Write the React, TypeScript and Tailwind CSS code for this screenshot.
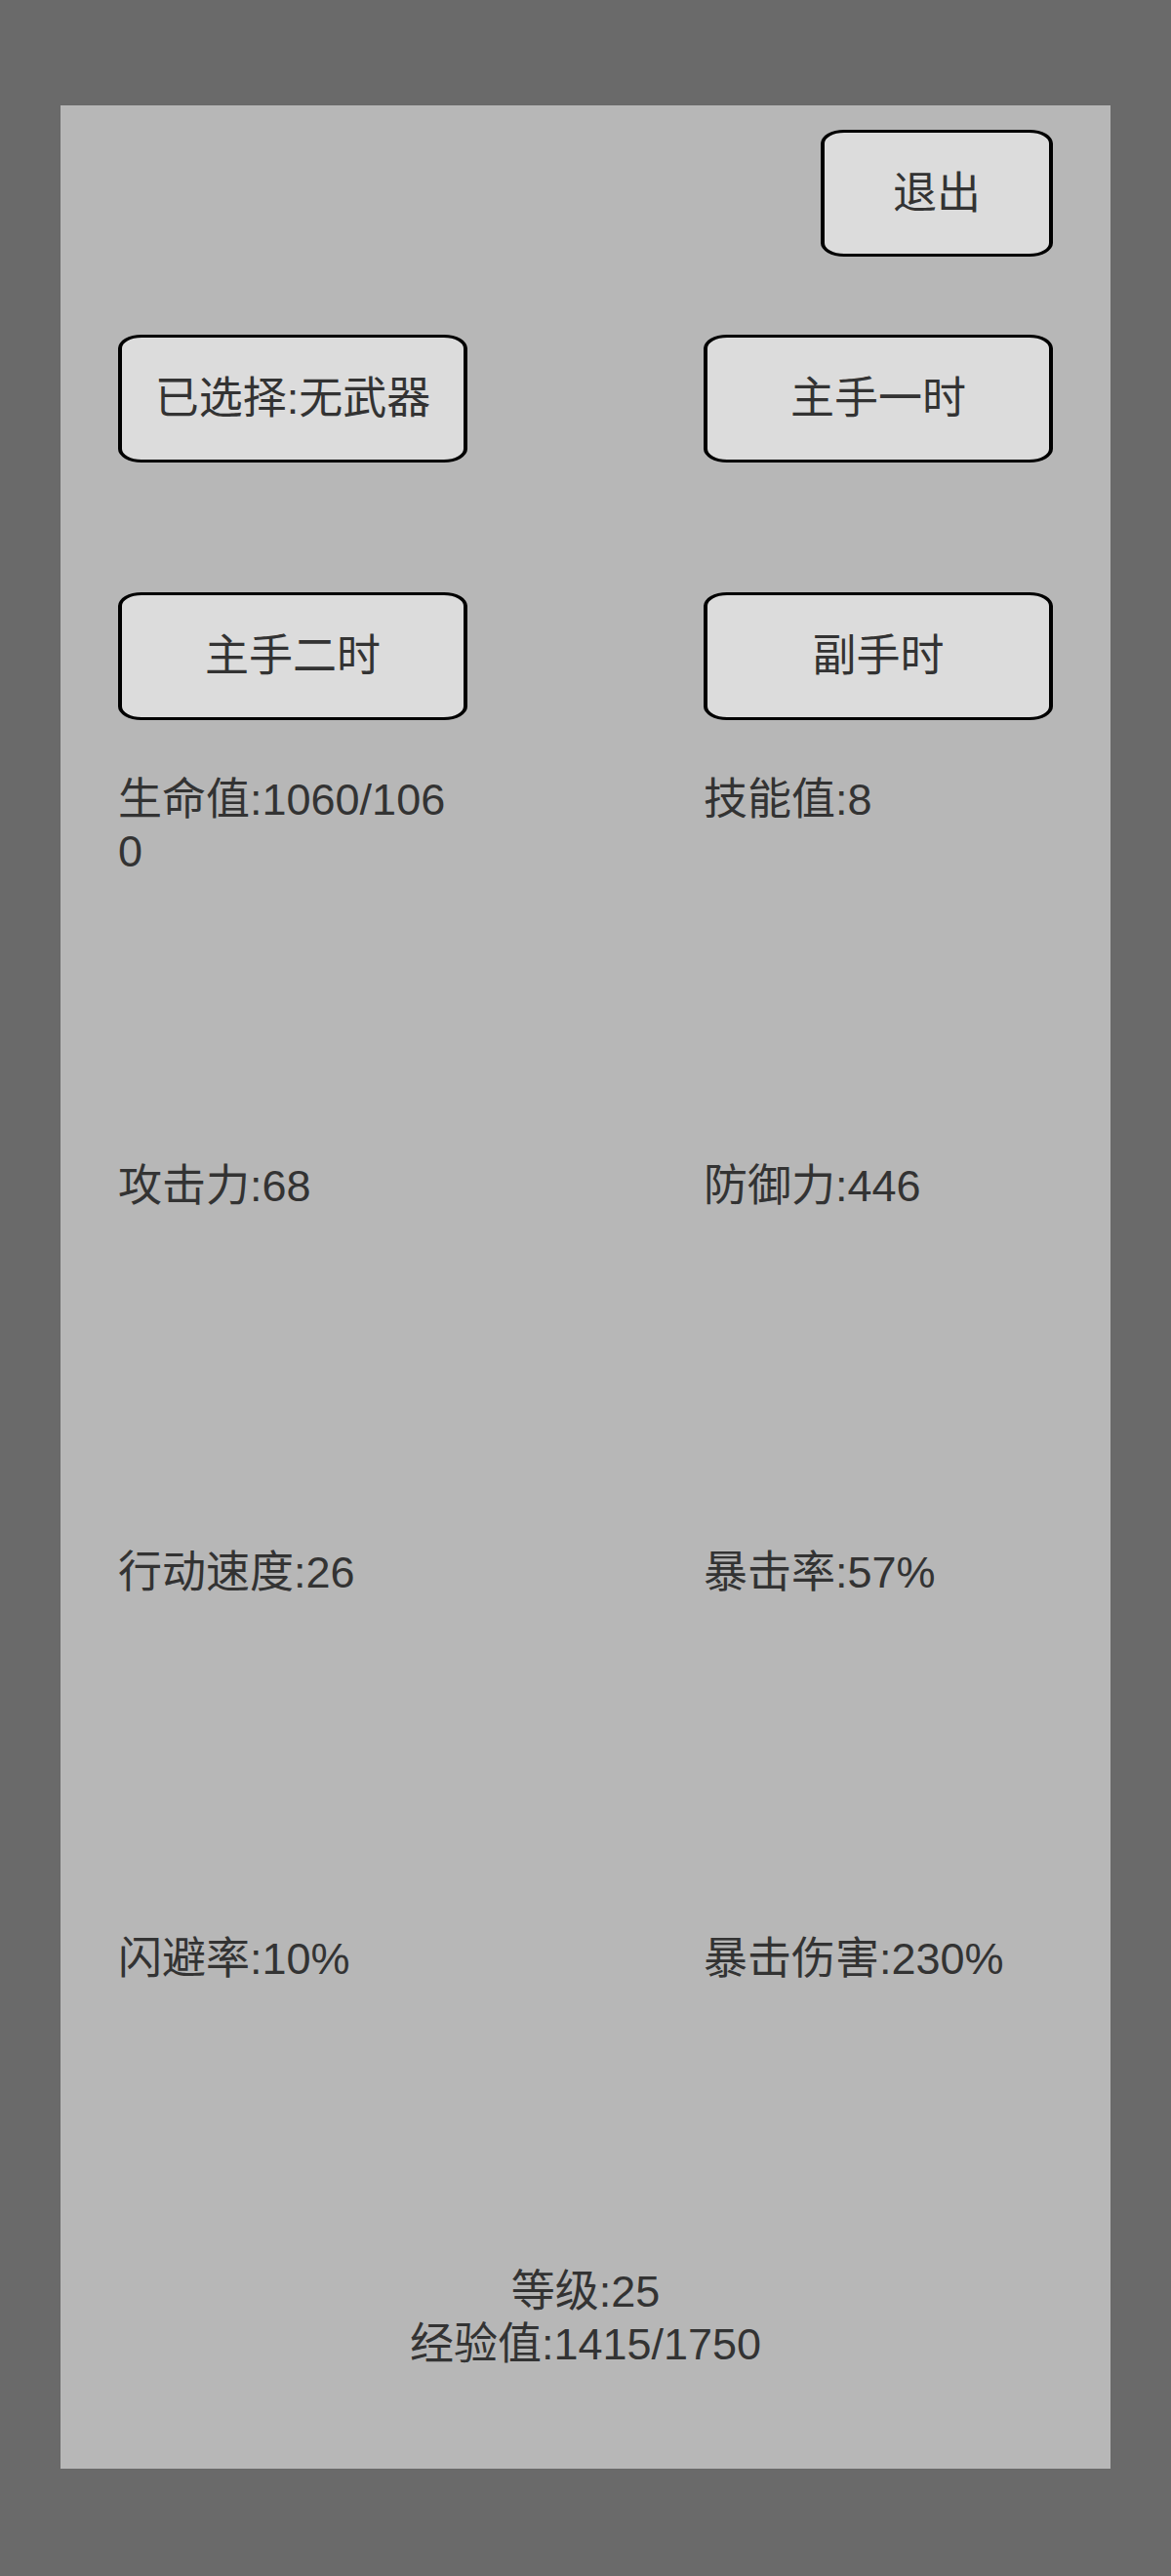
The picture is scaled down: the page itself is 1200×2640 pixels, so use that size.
const weaponSlots = ["已选择:无武器", "主手一时", "主手二时", "副手时"];

const stats = [
  ["生命值:1060/1060", "技能值:8"],
  ["攻击力:68", "防御力:446"],
  ["行动速度:26", "暴击率:57%"],
  ["闪避率:10%", "暴击伤害:230%"],
];

function PanelButton({ label, className = "" }: { label: string; className?: string }) {
  return (
    <button
      className={`flex items-center justify-center bg-[#dcdcdc] border-black border-y-[3px] border-x-4 rounded-[24px/14px] text-[45px] leading-[53px] text-[#333] ${className}`}
    >
      {label}
    </button>
  );
}

export default function App() {
  return (
    <div className="min-h-[2640px] w-full bg-[#6a6a6a] pt-[108px] px-[62px] font-['Liberation_Sans','Noto_Sans_CJK_SC',sans-serif] text-[#333]">
      <div className="h-[2422px] bg-[#b7b7b7] px-[59px] pt-[25px] flex flex-col">
        <div className="flex justify-end">
          <PanelButton label="退出" className="w-[238px] h-[130px]" />
        </div>

        <div className="mt-[80px] grid grid-cols-[358px_358px] justify-between gap-y-[133px]">
          {weaponSlots.map((s) => (
            <PanelButton key={s} label={s} className="w-[358px] h-[131px]" />
          ))}
        </div>

        <div className="mt-[55px] grid grid-cols-[358px_358px] justify-between grid-rows-[396px_396px_396px_341px] text-[45px] leading-[53px]">
          {stats.flat().map((s) => (
            <div key={s} className="break-all">
              {s}
            </div>
          ))}
        </div>

        <div className="text-center text-[45px] leading-[54px]">
          <div>等级:25</div>
          <div>经验值:1415/1750</div>
        </div>
      </div>
    </div>
  );
}
